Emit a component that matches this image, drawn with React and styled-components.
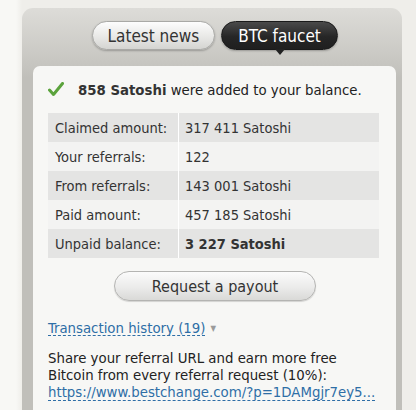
import styled, { createGlobalStyle } from "styled-components"

const Global = createGlobalStyle`
  html, body {
    margin: 0;
    padding: 0;
    background: #efeeea;
  }
  body {
    font-family: "DejaVu Sans Condensed", "DejaVu Sans", sans-serif;
    color: #222;
  }
`

const rows = [
  { label: "Claimed amount:", value: "317 411 Satoshi" },
  { label: "Your referrals:", value: "122" },
  { label: "From referrals:", value: "143 001 Satoshi" },
  { label: "Paid amount:", value: "457 185 Satoshi" },
  { label: "Unpaid balance:", value: "3 227 Satoshi", bold: true },
]

export default function App() {
  return (
    <>
      <Global />
      <Page>
        <Panel>
          <Tabs>
            <Tab>Latest news</Tab>
            <Tab active>BTC faucet</Tab>
          </Tabs>
          <Card>
            <Message>
              <svg width="16" height="15" viewBox="0 0 16 15">
                <path d="M1.5 8 L5.5 12.5 L14.5 1.5" fill="none" stroke="#5ba33c" strokeWidth="3" strokeLinecap="round" strokeLinejoin="round" />
              </svg>
              <span><b>858 Satoshi</b> were added to your balance.</span>
            </Message>
            <Stats>
              <tbody>
                {rows.map((r, i) => (
                  <Row key={r.label} odd={i % 2 === 0}>
                    <Label>{r.label}</Label>
                    <Value bold={r.bold}>{r.value}</Value>
                  </Row>
                ))}
              </tbody>
            </Stats>
            <ButtonWrap>
              <PayoutButton>Request a payout</PayoutButton>
            </ButtonWrap>
            <History>
              <DashedLink>Transaction history (19)</DashedLink>
              <Arrow>▼</Arrow>
            </History>
            <Share>
              Share your referral URL and earn more free Bitcoin from every referral request (10%):
              <br />
              <DashedLink>https://www.bestchange.com/?p=1DAMgjr7ey5...</DashedLink>
            </Share>
          </Card>
        </Panel>
      </Page>
    </>
  )
}

const Page = styled.div`
  height: 410px;
  overflow: hidden;
  padding: 8px 0 0 22px;
  box-sizing: border-box;
  background: linear-gradient(to right, #f8f8f5 0, #f8f8f5 16px, #efeeea 22px);
`

const Panel = styled.div`
  width: 380px;
  height: 420px;
  box-sizing: border-box;
  border-radius: 11px 11px 0 0;
  background: linear-gradient(to bottom, #dddcd8 0, #c9c8c3 50px, #c0bfba 70px, #c0bfba 100%);
  padding: 13px 6px 0 11px;
`

const Tabs = styled.div`
  display: flex;
  gap: 6px;
  padding-left: 59px;
`

const Tab = styled.div`
  position: relative;
  height: 29px;
  box-sizing: border-box;
  padding: 0 ${p => (p.active ? 16.5 : 14.5)}px;
  border-radius: 15px;
  display: flex;
  align-items: center;
  font-size: 17px;
  color: ${p => (p.active ? "#fff" : "#333")};
  background: ${p =>
    p.active
      ? "linear-gradient(to bottom, #4a4a4a, #262626 55%, #1f1f1f)"
      : "linear-gradient(to bottom, #fdfdfd, #e6e6e4 60%, #d4d4d1)"};
  border: 1px solid ${p => (p.active ? "#1a1a1a" : "#a9a9a6")};
  box-shadow: 0 1px 2px rgba(0, 0, 0, 0.25);
  &::after {
    content: "";
    display: ${p => (p.active ? "block" : "none")};
    position: absolute;
    left: 50%;
    bottom: -6px;
    margin-left: -5px;
    border-left: 5px solid transparent;
    border-right: 5px solid transparent;
    border-top: 6px solid #222;
  }
`

const Card = styled.div`
  margin-top: 16px;
  background: #f7f7f5;
  border-radius: 7px 7px 0 0;
  padding: 14px 17px 0 15px;
  height: 360px;
`

const Message = styled.div`
  display: flex;
  align-items: center;
  gap: 14px;
  font-size: 14.8px;
  height: 18px;
  color: #222;
  b {
    color: #333;
  }
`

const Stats = styled.table`
  margin-top: 15px;
  width: 331px;
  border-collapse: collapse;
  font-size: 14.5px;
  color: #333;
`

const Row = styled.tr`
  background: ${p => (p.odd ? "#e4e4e3" : "#f3f3f2")};
  height: 29px;
`

const Label = styled.td`
  width: 123px;
  padding: 0 0 0 7px;
  border-right: 1px solid #fff;
`

const Value = styled.td`
  padding: 0 0 0 6px;
  font-weight: ${p => (p.bold ? "bold" : "normal")};
`

const ButtonWrap = styled.div`
  display: flex;
  padding-left: 66px;
  margin-top: 13px;
`

const PayoutButton = styled.button`
  width: 202px;
  height: 30px;
  border-radius: 15px;
  border: 1px solid #b4b4b2;
  background: linear-gradient(to bottom, #fbfbfb, #ebebea 55%, #d9d9d7);
  box-shadow: 0 1px 1px rgba(0, 0, 0, 0.15);
  font-family: "DejaVu Sans Condensed", "DejaVu Sans", sans-serif;
  font-size: 16px;
  color: #333;
  padding: 0;
`

const History = styled.div`
  margin-top: 19px;
  font-size: 14.8px;
  display: flex;
  align-items: center;
  gap: 5px;
`

const DashedLink = styled.span`
  color: #2e6ea6;
  border-bottom: 1px dashed #2e6ea6;
  line-height: 15px;
`

const Arrow = styled.span`
  font-size: 8px;
  color: #9a9a9a;
`

const Share = styled.div`
  margin-top: 13px;
  font-size: 14.8px;
  line-height: 17px;
  color: #222;
`
